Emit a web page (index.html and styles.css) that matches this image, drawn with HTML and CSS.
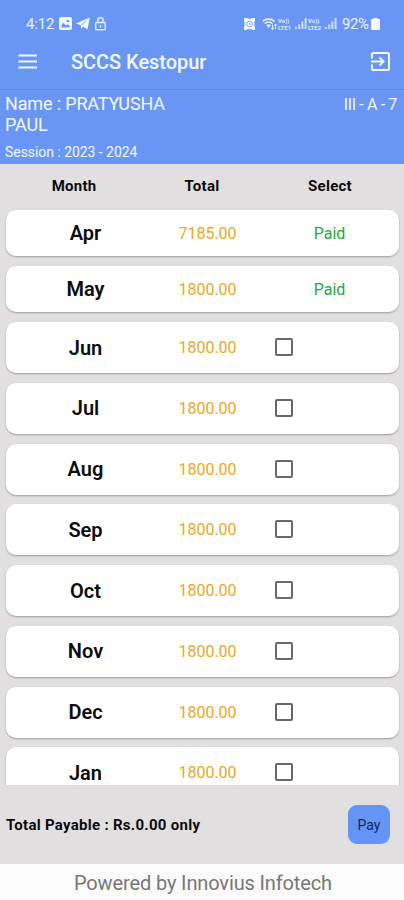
FILE: index.html
```
<!DOCTYPE html>
<html lang="en">
<head>
    <meta charset="UTF-8">
    <meta name="viewport" content="width=device-width, initial-scale=1.0">
    <title>SCCS Kestopur</title>
    <link rel="stylesheet" href="styles.css">
</head>
<body>
    <div class="status-bar">
        <span class="clock">4:12</span>
        <svg class="icon-image" width="13" height="13" viewBox="0 0 13 13">
            <rect width="13" height="13" rx="2.5" fill="#f2f8ff"/>
            <path d="M2.5 10.5V8l2-2 2.5 2.5 1.500-1.500 2.200 2v1.500z" fill="#6996f5"/>
            <circle cx="8.800" cy="4" r="1.300" fill="#6996f5"/>
        </svg>
        <svg class="icon-plane" width="14" height="13" viewBox="0 0 14 13">
            <path d="M0 6.500L13.800.5 11.500 12.500 7.200 9.500 5.300 11.500 4.700 8z" fill="#f2f8ff"/>
            <path d="M4.900 8l5-4.300-3.400 5" fill="none" stroke="#6996f5" stroke-width=".5"/>
        </svg>
        <svg class="icon-lock" width="11" height="14" viewBox="0 0 11 14">
            <path d="M2.800 5.500V3.500a2.700 2.700 0 0 1 5.400 0v2M1.700 5.500h7.600a1 1 0 0 1 1 1v5.300a1 1 0 0 1-1 1H1.700a1 1 0 0 1-1-1V6.500a1 1 0 0 1 1-1zM5.500 8v2.500" fill="none" stroke="#e3edff" stroke-width="1.400"/>
        </svg>
        <span class="spacer"></span>
        <svg class="icon-alarm" width="11" height="12" viewBox="0 0 11 12">
            <path d="M0 0h3l1 .8h3L8 0h3v3l-.6 1v4l.6 1v3H8.500l-.8-.7H3.300l-.8.700H0V9l.6-1V4L0 3z" fill="#f2f8ff"/>
            <circle cx="5.500" cy="6" r="2.900" fill="none" stroke="#6996f5" stroke-width=".8"/>
            <path d="M5.500 4.500V6.200H7" fill="none" stroke="#6996f5" stroke-width=".7"/>
        </svg>
        <svg class="icon-wifi" width="16" height="13" viewBox="0 0 16 13">
            <path d="M.7 4.300a9 9 0 0 1 11.800 0M2.800 6.600a5.800 5.800 0 0 1 7.600 0" fill="none" stroke="#e3edff" stroke-width="1.700"/>
            <path d="M4.200 8.300a3.500 3.500 0 0 1 4.800 0L6.600 11z" fill="#e3edff"/>
            <path d="M10.500 12.500V7.500M9 11l1.500 1.500L12 11M13.500 7v5M12 8.500L13.500 7 15 8.500" fill="none" stroke="#e3edff"/>
        </svg>
        <span class="volte"><span>Vo))</span><span>LTE1</span></span>
        <svg class="icon-signal" width="12" height="11" viewBox="0 0 12 11">
            <path d="M0 9h2v2H0zM3.200 6.500h2V11h-2zM6.400 3.500h2V11h-2zM9.600 0h2v11h-2z" fill="#cfdefc"/>
        </svg>
        <span class="volte"><span>Vo))</span><span>LTE2</span></span>
        <svg class="icon-signal" width="12" height="11" viewBox="0 0 12 11">
            <path d="M0 9h2v2H0zM3.200 6.500h2V11h-2zM6.400 3.500h2V11h-2zM9.600 0h2v11h-2z" fill="#cfdefc"/>
        </svg>
        <span class="percent">92%</span>
        <svg class="icon-battery" width="9" height="12" viewBox="0 0 9 12">
            <path d="M2.500 0h4v1H8a1 1 0 0 1 1 1v9a1 1 0 0 1-1 1H1a1 1 0 0 1-1-1V2a1 1 0 0 1 1-1h1.500z" fill="#f6faff"/>
        </svg>
    </div>
    <header class="app-bar">
        <svg width="20" height="16" viewBox="0 0 20 16">
            <path d="M.5 1.500h18.500M.5 7.500h18.500M.5 13.500h18.500" stroke="#f2f8ff" stroke-width="2"/>
        </svg>
        <h1 class="title">SCCS Kestopur</h1>
        <svg width="19" height="20" viewBox="0 0 19 20" fill="none" stroke="#f2f8ff" stroke-width="2">
            <path d="M1 6.500V2.500A1.500 1.500 0 0 1 2.500 1h14A1.500 1.500 0 0 1 18 2.500v14a1.500 1.500 0 0 1-1.500 1.500h-14A1.500 1.500 0 0 1 1 16.500V12.500M0 9.500h12M8.500 5.500l4 4-4 4"/>
        </svg>
    </header>
    <section class="student">
        <div class="student-row">
            <div class="name">Name : PRATYUSHA PAUL</div>
            <div class="class">III - A - 7</div>
        </div>
        <div class="session">Session : 2023 - 2024</div>
    </section>
    <div class="table-head">
        <span>Month</span><span>Total</span><span>Select</span>
    </div>
    <main class="list">
        <div class="card paid"><b>Apr</b><span class="amount">7185.00</span><span class="status">Paid</span></div>
        <div class="card paid"><b>May</b><span class="amount">1800.00</span><span class="status">Paid</span></div>
        <div class="card"><b>Jun</b><span class="amount">1800.00</span><span class="checkbox"></span></div>
        <div class="card"><b>Jul</b><span class="amount">1800.00</span><span class="checkbox"></span></div>
        <div class="card"><b>Aug</b><span class="amount">1800.00</span><span class="checkbox"></span></div>
        <div class="card"><b>Sep</b><span class="amount">1800.00</span><span class="checkbox"></span></div>
        <div class="card"><b>Oct</b><span class="amount">1800.00</span><span class="checkbox"></span></div>
        <div class="card"><b>Nov</b><span class="amount">1800.00</span><span class="checkbox"></span></div>
        <div class="card"><b>Dec</b><span class="amount">1800.00</span><span class="checkbox"></span></div>
        <div class="card"><b>Jan</b><span class="amount">1800.00</span><span class="checkbox"></span></div>
    </main>
    <div class="total-bar">
        <span class="total">Total Payable : Rs.0.00 only</span>
        <button class="pay">Pay</button>
    </div>
    <footer class="footer">Powered by Innovius Infotech</footer>
</body>
</html>
```
FILE: styles.css
```
* {
    box-sizing: border-box;
}
body {
    margin: 0;
    height: 900px;
    display: flex;
    flex-direction: column;
    overflow: hidden;
    background-color: #e1dfe0;
    font-family: Roboto, "Liberation Sans", sans-serif;
    color: #0c0c0c;
}
svg {
    display: block;
    flex: none;
}
.status-bar {
    height: 40px;
    flex: none;
    padding: 7px 24px 0 26px;
    display: flex;
    align-items: center;
    background-color: #6996f5;
    color: #eaf2ff;
    font-size: 15px;
}
.clock {
    width: 33px;
    letter-spacing: -0.2px;
}
.icon-plane {
    margin-left: 4px;
}
.icon-lock {
    margin-left: 5px;
}
.spacer {
    flex: 1;
}
.icon-alarm {
    margin-right: 1px;
}
.icon-wifi {
    margin-left: 6px;
}
.volte {
    width: 16px;
    display: flex;
    flex-direction: column;
    font-size: 6px;
    line-height: 7px;
    font-weight: 700;
    color: #dfeaff;
}
.icon-signal {
    margin-left: 1px;
    margin-right: 1px;
}
.percent {
    margin: 0 1px 0 4px;
    width: 28px;
    letter-spacing: -0.4px;
}
.app-bar {
    height: 50px;
    flex: none;
    padding: 0 14px 6px 18px;
    display: flex;
    align-items: center;
    background-color: #6996f5;
    border-bottom: 1px solid #5f8ae2;
}
.title {
    flex: 1;
    margin: 0 0 0 33px;
    font-size: 20px;
    font-weight: 500;
    letter-spacing: -0.05px;
    color: #f2f8ff;
}
.student {
    height: 74px;
    flex: none;
    padding: 4px 7px 0 5px;
    background-color: #6996f5;
    color: #f2f8ff;
}
.student-row {
    display: flex;
    justify-content: space-between;
}
.name {
    width: 190px;
    font-size: 18px;
    line-height: 20.5px;
    letter-spacing: -0.15px;
}
.class {
    font-size: 16px;
    line-height: 22px;
    letter-spacing: -0.35px;
}
.session {
    margin-top: 9px;
    font-size: 14px;
    line-height: 16px;
    letter-spacing: -0.05px;
}
.table-head {
    height: 45px;
    flex: none;
    padding: 0 10px 2px;
    display: grid;
    grid-template-columns: repeat(3, 128px);
    align-items: center;
    text-align: center;
    font-size: 15px;
    font-weight: 700;
    letter-spacing: 0.25px;
}
.list {
    height: 576px;
    flex: none;
    padding: 1px 5px 0 6px;
    overflow: hidden;
}
.card {
    height: 51px;
    margin-bottom: 9.75px;
    padding: 0 9px 0 18.5px;
    display: grid;
    grid-template-columns: repeat(3, 122px);
    align-items: center;
    text-align: center;
    background-color: #fff;
    border-radius: 10px;
    box-shadow: 0 1px 2px rgba(0, 0, 0, 0.3);
}
.card.paid {
    height: 46px;
    margin-bottom: 10px;
}
.card b {
    font-size: 20px;
    font-weight: 600;
}
.amount {
    font-size: 16px;
    color: #e9a820;
}
.status {
    font-size: 16px;
    color: #27a83a;
}
.checkbox {
    width: 18px;
    height: 18px;
    margin: 0 0 1px 6.5px;
    border: 2px solid #69696b;
    border-radius: 2px;
}
.total-bar {
    height: 79px;
    flex: none;
    padding: 0 14px 0 6px;
    display: flex;
    align-items: center;
    justify-content: space-between;
}
.total {
    font-size: 15px;
    font-weight: 700;
    letter-spacing: 0.28px;
}
.pay {
    width: 42px;
    height: 39px;
    padding: 0;
    border: 0;
    border-radius: 9px;
    background-color: #6394f6;
    font: 14px Roboto, "Liberation Sans", sans-serif;
    color: #14284e;
}
.footer {
    height: 36px;
    flex: none;
    padding: 1px 0 0 2px;
    background-color: #fafafa;
    text-align: center;
    font-size: 20px;
    line-height: 37px;
    letter-spacing: -0.13px;
    color: #777;
}
```
